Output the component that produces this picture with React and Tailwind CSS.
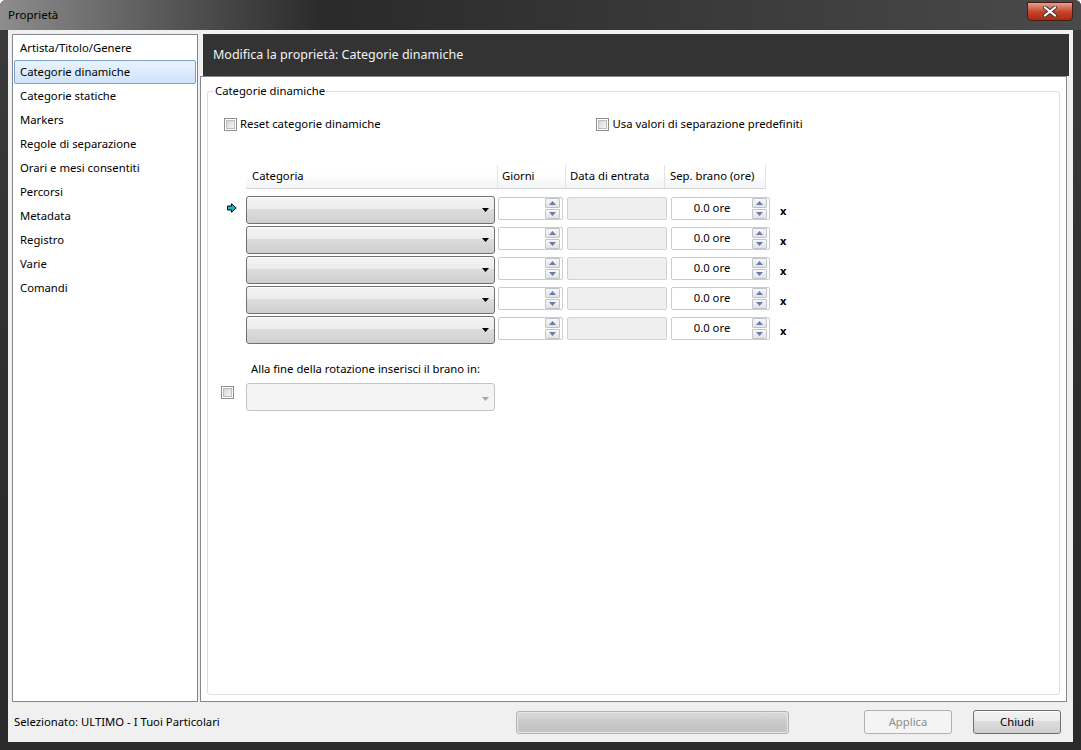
import React from "react";

const menu = [
  "Artista/Titolo/Genere",
  "Categorie dinamiche",
  "Categorie statiche",
  "Markers",
  "Regole di separazione",
  "Orari e mesi consentiti",
  "Percorsi",
  "Metadata",
  "Registro",
  "Varie",
  "Comandi",
];

function Checkbox() {
  return (
    <div className="w-[13px] h-[13px] border border-[#8e8f8f] bg-white p-[1px] shrink-0">
      <div className="w-full h-full bg-gradient-to-br from-[#d6d6d6] to-[#f6f6f6] border border-[#bdbdbd]" />
    </div>
  );
}

function Spin() {
  return (
    <div className="flex flex-col gap-[1px] w-[15px]">
      <div className="h-[10px] border border-[#c0c3c8] rounded-[1px] bg-gradient-to-b from-[#f7f7f7] to-[#e3e3e3] flex items-center justify-center">
        <svg width="7" height="4" viewBox="0 0 7 4">
          <path d="M3.5 0 L7 4 L0 4 Z" fill="#6b7bb0" />
        </svg>
      </div>
      <div className="h-[10px] border border-[#c0c3c8] rounded-[1px] bg-gradient-to-b from-[#f7f7f7] to-[#e3e3e3] flex items-center justify-center">
        <svg width="7" height="4" viewBox="0 0 7 4">
          <path d="M0 0 L7 0 L3.5 4 Z" fill="#6b7bb0" />
        </svg>
      </div>
    </div>
  );
}

function Combo({ disabled }) {
  if (disabled) {
    return (
      <div className="w-[249px] h-[28px] border border-[#c3c3c3] rounded-[3px] bg-[#f4f4f4] flex items-center justify-end pr-[5px] pt-[3px]">
        <svg width="7" height="4" viewBox="0 0 7 4">
          <path d="M0 0 L7 0 L3.5 4 Z" fill="#a8a8a8" />
        </svg>
      </div>
    );
  }
  return (
    <div className="w-[249px] h-[28px] border border-[#707070] rounded-[3px] shadow-[inset_0_1px_0_#ffffff] bg-[linear-gradient(to_bottom,#f4f4f4_0%,#ececec_45%,#dddddd_45%,#cfcfcf_100%)] flex items-center justify-end pr-[5px]">
      <svg width="7" height="4" viewBox="0 0 7 4">
        <path d="M0 0 L7 0 L3.5 4 Z" fill="#000" />
      </svg>
    </div>
  );
}

function Row({ first }) {
  return (
    <div className="flex items-start h-[30px]">
      <div className="w-[38px] pl-[19px] pt-[7px]">
        {first && (
          <svg width="10" height="10" viewBox="0 0 10 10">
            <path d="M0.5 3 H4.5 V0.8 L9.2 5 L4.5 9.2 V7 H0.5 Z" fill="#1fb8c4" stroke="#000" strokeWidth="1" />
          </svg>
        )}
      </div>
      <Combo />
      <div className="ml-[3px] mt-[1px] w-[65px] h-[23px] border border-[#c8ccd2] rounded-[2px] bg-white flex items-center justify-end pr-[2px]">
        <Spin />
      </div>
      <div className="ml-[4px] mt-[1px] w-[100px] h-[23px] border border-[#d2d2d2] rounded-[2px] bg-[#efefef]" />
      <div className="ml-[4px] mt-[1px] w-[99px] h-[23px] border border-[#c8ccd2] rounded-[2px] bg-white flex items-center pr-[2px]">
        <div className="flex-1 text-center text-black">0.0 ore</div>
        <Spin />
      </div>
      <div className="ml-[10px] mt-[8px] text-[11px] font-bold leading-[14px] text-black">x</div>
    </div>
  );
}

export default function App() {
  return (
    <div
      className="w-[1081px] h-[750px] flex flex-col bg-gradient-to-b from-[#3b3b3b] via-[#2e2e2e] to-[#2a2a2a] rounded-t-[6px] overflow-hidden"
      style={{ fontFamily: '"Noto Sans", "Segoe UI", sans-serif' }}
    >
      {/* title bar */}
      <div className="h-[30px] flex items-start shrink-0 bg-gradient-to-r from-[#8d8d8d] via-[#2a2a2a] via-30% to-[#4a4a4a]">
        <div className="pl-[8px] pt-[7px] text-[11.5px] leading-[16px] text-black">Proprietà</div>
        <div className="ml-auto mr-[8px] mt-[2px] w-[46px] h-[19px] rounded-b-[4px] border border-[#4a1b10] bg-gradient-to-b from-[#e3a08e] via-[#c8452a] to-[#a62b12] flex items-center justify-center">
          <svg width="14" height="11" viewBox="0 0 14 11">
            <path d="M2 1.5 L12 9.5 M12 1.5 L2 9.5" stroke="#3a3a3a" strokeWidth="4" strokeLinecap="round" />
            <path d="M2 1.5 L12 9.5 M12 1.5 L2 9.5" stroke="#ffffff" strokeWidth="2.2" strokeLinecap="round" />
          </svg>
        </div>
      </div>

      {/* client */}
      <div className="mx-[8px] h-[712px] bg-[#f0f0f0] flex flex-col text-[11.3px] text-black">
        <div className="flex h-[672px] pt-[4px] pl-[4px] pr-[4px]">
          <div className="w-[186px] h-full border border-[#828790] bg-white px-[1px] pt-[1px]">
            {menu.map((m, i) => (
              <div
                key={m}
                className={
                  "h-[24px] flex items-center pl-[5px] border rounded-[2px] " +
                  (i === 1
                    ? "border-[#7da2ce] bg-gradient-to-b from-[#eaf3fd] to-[#cfe3fb]"
                    : "border-transparent")
                }
              >
                {m}
              </div>
            ))}
          </div>

          <div className="flex-1 ml-[2px] flex flex-col">
            <div className="h-[42px] ml-[3px] bg-[#333333] flex items-center pl-[10px] text-[12.5px] text-[#f2f2f2]">
              Modifica la proprietà: Categorie dinamiche
            </div>
            <div className="flex-1 mr-[2px] border border-[#828790] bg-white px-[6px] pt-[6px] pb-[6px] flex">
              <fieldset className="flex-1 border border-[#d5dfe5] rounded-[3px] min-w-0">
                <legend className="ml-[6px] px-[1px] leading-[16px]">Categorie dinamiche</legend>

                <div className="flex items-center mt-[17px] h-[16px]">
                  <div className="ml-[16px]"><Checkbox /></div>
                  <span className="ml-[3px]">Reset categorie dinamiche</span>
                  <div className="ml-[215px]"><Checkbox /></div>
                  <span className="ml-[4px]">Usa valori di separazione predefiniti</span>
                </div>

                <div className="ml-[38px] mt-[33px] w-[520px] h-[24px] flex border-b border-[#d5d5d5] bg-gradient-to-b from-white from-40% to-[#f3f4f6]">
                  <div className="w-[252px] pl-[6px] flex items-center border-r border-[#e2e3e5]">Categoria</div>
                  <div className="w-[68px] pl-[4px] flex items-center border-r border-[#e2e3e5]">Giorni</div>
                  <div className="w-[99px] pl-[4px] flex items-center border-r border-[#e2e3e5]">Data di entrata</div>
                  <div className="w-[101px] pl-[5px] flex items-center border-r border-[#e2e3e5]">Sep. brano (ore)</div>
                </div>

                <div className="mt-[7px] flex flex-col">
                  <Row first />
                  <Row />
                  <Row />
                  <Row />
                  <Row />
                </div>

                <div className="ml-[43px] mt-[15px] leading-[16px]">Alla fine della rotazione inserisci il brano in:</div>
                <div className="flex items-start mt-[6px]">
                  <div className="w-[38px] pl-[13px] pt-[3px]"><Checkbox /></div>
                  <Combo disabled />
                </div>
              </fieldset>
            </div>
          </div>
        </div>

        {/* status bar */}
        <div className="flex-1 flex items-center pl-[6px]">
          <div className="w-[502px]">Selezionato: ULTIMO - I Tuoi Particolari</div>
          <div className="w-[273px] h-[23px] border border-[#b2b2b2] rounded-[3px] bg-[#e6e6e6] p-[1px]">
            <div className="w-full h-full rounded-[2px] bg-gradient-to-b from-[#dadada] via-[#c9c9c9] to-[#c4c4c4]" />
          </div>
          <div className="ml-[75px] w-[88px] h-[24px] border border-[#adb2b5] rounded-[3px] bg-[#f4f4f4] flex items-center justify-center text-[#8d8d8d]">
            Applica
          </div>
          <div className="ml-[21px] w-[88px] h-[24px] border border-[#707070] rounded-[3px] shadow-[inset_0_1px_0_#ffffff] bg-[linear-gradient(to_bottom,#f2f2f2_0%,#ebebeb_45%,#dddddd_45%,#cfcfcf_100%)] flex items-center justify-center">
            Chiudi
          </div>
        </div>
      </div>
    </div>
  );
}
